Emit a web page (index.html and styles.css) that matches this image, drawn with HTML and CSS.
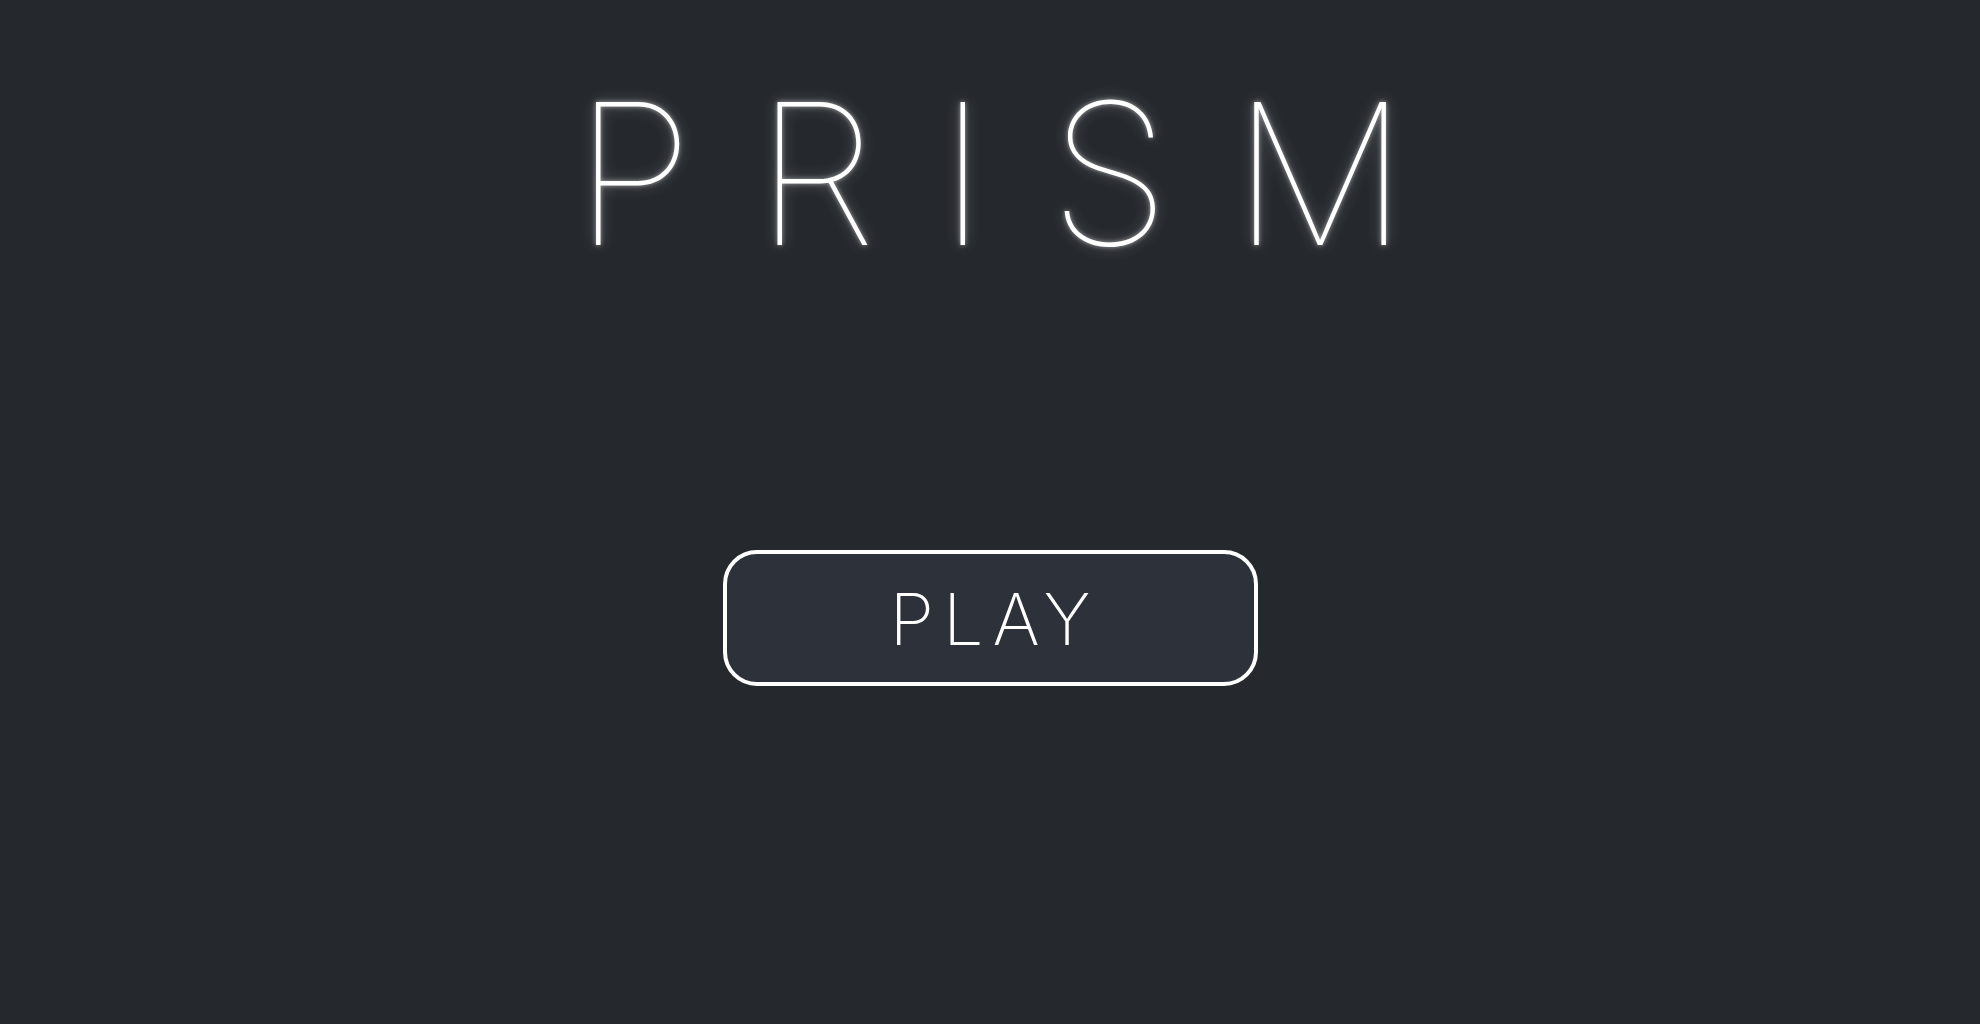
FILE: index.html
```
<!DOCTYPE html>
<html lang="en">
<head>
<meta charset="utf-8">
<title>Prism</title>
<link rel="stylesheet" href="styles.css">
</head>
<body>
<main class="screen">
  <h1 class="title">PRISM</h1>
  <button class="play-btn" type="button"><span class="play-label">PLAY</span></button>
</main>
</body>
</html>
```
FILE: styles.css
```
html, body {
  margin: 0;
  padding: 0;
  height: 100%;
}
body {
  background: #25282d;
  color: #ffffff;
  font-family: Inter, "Liberation Sans", sans-serif;
}
.screen {
  display: flex;
  flex-direction: column;
  align-items: center;
  padding-top: 75px;
  height: 100%;
  box-sizing: border-box;
}
.title {
  margin: 0;
  font-family: Inter, "Liberation Sans", sans-serif;
  font-weight: 100;
  font-size: 197px;
  line-height: 1;
  letter-spacing: 62px;
  padding-left: 64px;
  color: #ffffff;
  text-shadow: 0 0 5px rgba(255,255,255,0.55), 0 0 15px rgba(255,255,255,0.3);
}
.play-btn {
  margin-top: 278px;
  width: 535px;
  height: 136px;
  box-sizing: border-box;
  border: 4px solid #ffffff;
  border-radius: 34px;
  background: #2d323a;
  color: #ffffff;
  display: flex;
  align-items: center;
  justify-content: center;
  padding: 0;
  cursor: pointer;
}
.play-label {
  font-family: Inter, "Liberation Sans", sans-serif;
  font-weight: 200;
  font-size: 72px;
  line-height: 1;
  letter-spacing: 9px;
  padding-left: 9px;
  margin-top: 2px;
}
```
